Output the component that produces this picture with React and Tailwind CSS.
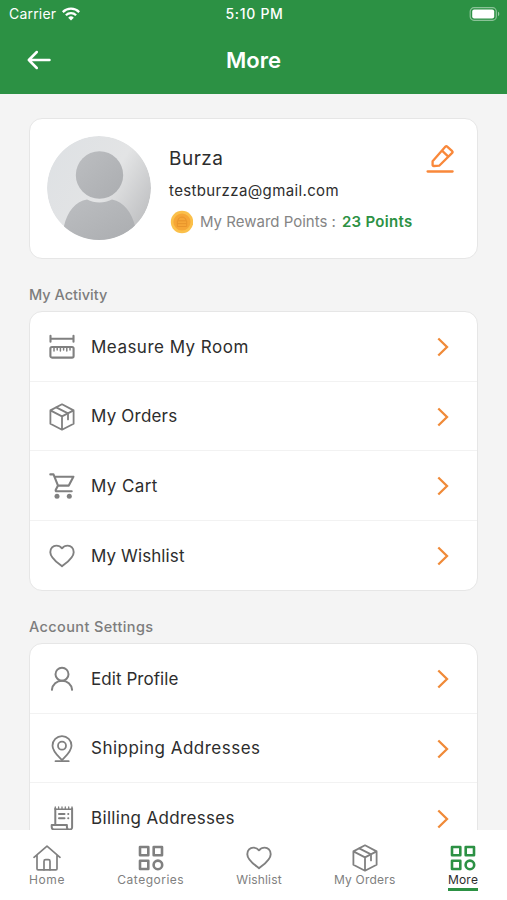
import React from 'react';
import clsx from 'clsx';

const stroke = {
  fill: 'none',
  stroke: 'currentColor',
  strokeLinecap: 'round',
  strokeLinejoin: 'round',
};

function MeasureIcon() {
  return (
    <svg viewBox="0 0 26 26" className="w-[26px] h-[26px]" {...stroke} strokeWidth="2.1">
      <path d="M1.5 1.8v6M24.5 1.8v6M1.5 4.8h23" />
      <rect x="1.4" y="13" width="23.2" height="10.6" rx="1.6" />
      <path d="M5 14v3M8.2 14v2M11.4 14v3M14.6 14v2M17.8 14v3M21 14v2" strokeWidth="1.5" />
    </svg>
  );
}

function BoxIcon() {
  return (
    <svg viewBox="0 0 26 28" className="w-[26px] h-[28px]" {...stroke} strokeWidth="1.8">
      <path d="M13 1.3 24.6 7.4v13.4L13 26.7 1.4 20.8V7.4zM1.4 7.4 13 13.4l11.6-6M13 13.4v13.3" />
      <path d="M7.2 4.4 19 10.4v6" />
    </svg>
  );
}

function CartIcon() {
  return (
    <svg viewBox="0 0 26 26" className="w-[26px] h-[26px]" {...stroke} strokeWidth="2.1">
      <path d="M1.3 1.4h3.2L9 12.6h10.8l4.6-8.9H5.5M9 12.6l-2.2 4.2c-.4.8 0 1.5.9 1.5h15" />
      <circle cx="8" cy="23.3" r="2.5" fill="currentColor" stroke="none" />
      <circle cx="20.3" cy="23.3" r="2.5" fill="currentColor" stroke="none" />
    </svg>
  );
}

function HeartIcon() {
  return (
    <svg viewBox="0 0 26 24" className="w-[26px] h-[24px]" {...stroke} strokeWidth="1.9">
      <path d="M13 22.2C9.5 19.3 1.3 14.4 1.3 8.2 1.3 4.3 4 1.6 7.3 1.6c2.3 0 4.3.9 5.7 2.7 1.4-1.8 3.4-2.7 5.7-2.7 3.3 0 6 2.7 6 6.6 0 6.2-8.2 11.1-11.7 14z" />
    </svg>
  );
}

function UserIcon() {
  return (
    <svg viewBox="0 0 24 26" className="w-[24px] h-[26px]" {...stroke} strokeWidth="2">
      <circle cx="12" cy="8.2" r="6.5" />
      <path d="M1.9 23.8C2.4 18.6 6.7 14.7 12 14.7s9.6 3.9 10.1 9.1" />
    </svg>
  );
}

function PinIcon() {
  return (
    <svg viewBox="0 0 22 28" className="w-[22px] h-[28px]" {...stroke} strokeWidth="1.8">
      <path d="M11 25.2C8.5 22.3 1.5 16.6 1.5 10.7a9.5 9.5 0 0 1 19 0c0 5.900-7 11.600-9.500 14.500z" />
      <circle cx="11" cy="10.7" r="4" />
      <path d="M4.5 26.2h13.2" />
    </svg>
  );
}

function BillIcon() {
  return (
    <svg viewBox="0 0 24 26" className="w-[24px] h-[26px]" {...stroke} strokeWidth="2">
      <path d="M5.3 18V2.6M22.1 2.6V21a2.400 2.400 0 0 1-2.400 2.600H4.300A2.600 2.600 0 0 1 1.700 21v-2h15.200v2a2.500 2.500 0 0 0 2.700 2.600" />
      <path d="M5.3 3.3h16.8" strokeWidth="1.5" />
      <path d="M5.3 1v2M8.6 1v2M12 1v2M15.3 1v2M18.7 1v2M22 1v2" strokeWidth="1.3" />
      <path d="M9 8h5.5M9 12.2h5.5M18.2 8h.1M18.2 12.2h.1" />
    </svg>
  );
}

function HomeIcon() {
  return (
    <svg viewBox="0 0 28 26" className="w-[28px] h-[26px]" {...stroke} strokeWidth="1.7">
      <path d="M1 12.300 14 1.200l13 11.100M4 10v13.700c0 .7.400 1.100 1.100 1.100h17.800c.7 0 1.100-.4 1.100-1.100V10" />
      <path d="M11 24.800v-8.600c0-1 .6-1.600 1.600-1.600h2.800c1 0 1.600.6 1.600 1.600v8.600" />
    </svg>
  );
}

function GridIcon() {
  return (
    <svg viewBox="0 0 26 26" className="w-[26px] h-[26px]" fill="none" stroke="currentColor" strokeWidth="2.6" strokeLinejoin="round">
      <rect x="2" y="2" width="8.3" height="8.3" />
      <rect x="15.7" y="2" width="8.3" height="8.3" />
      <rect x="2" y="15.7" width="8.3" height="8.3" />
      <circle cx="19.9" cy="19.9" r="4.3" />
    </svg>
  );
}

const activity = [
  { label: 'Measure My Room', Icon: MeasureIcon, tracking: 'tracking-[0.48px]' },
  { label: 'My Orders', Icon: BoxIcon, tracking: 'tracking-[0.2px]' },
  { label: 'My Cart', Icon: CartIcon, tracking: 'tracking-[0.4px]' },
  { label: 'My Wishlist', Icon: HeartIcon, tracking: 'tracking-[0.1px]' },
];

const settings = [
  { label: 'Edit Profile', Icon: UserIcon, tracking: 'tracking-[0.06px]' },
  { label: 'Shipping Addresses', Icon: PinIcon, tracking: 'tracking-[0.49px]' },
  { label: 'Billing Addresses', Icon: BillIcon, tracking: 'tracking-[0.33px]' },
];

const tabs = [
  { label: 'Home', Icon: HomeIcon, width: 'w-[36px]', tracking: 'tracking-[0.6px]' },
  { label: 'Categories', Icon: GridIcon, width: 'w-[67px]', tracking: 'tracking-[0.5px]' },
  { label: 'Wishlist', Icon: HeartIcon, width: 'w-[45px]', tracking: 'tracking-[0.15px]' },
  { label: 'My Orders', Icon: BoxIcon, width: 'w-[62px]', tracking: 'tracking-[0.2px]' },
  { label: 'More', Icon: GridIcon, width: 'w-[30px]', tracking: 'tracking-[0.2px]', active: true },
];

function StatusBar() {
  return (
    <div className="grid grid-cols-3 items-center h-[27px] pl-[9px] pr-[7px] text-white text-[14px]">
      <div className="flex items-center gap-[6px]">
        <span className="tracking-[0.2px]">Carrier</span>
        <svg viewBox="0 0 18 14" className="w-[18px] h-[14px]" fill="none" stroke="currentColor" strokeWidth="2.3">
          <path d="M.8 5.1a11.6 11.6 0 0 1 16.4 0" />
          <path d="M3.9 8.2a7.2 7.2 0 0 1 10.2 0" />
          <path d="M9 13.5 6.2 10.7a4 4 0 0 1 5.6 0z" fill="currentColor" stroke="none" />
        </svg>
      </div>
      <span className="text-center font-medium tracking-[0.7px] whitespace-nowrap">5:10 PM</span>
      <svg viewBox="0 0 31 14" className="w-[31px] h-[14px] justify-self-end">
        <rect x="1.2" y=".7" width="26.1" height="12.6" rx="3.8" fill="none" stroke="#fff" strokeOpacity=".45" strokeWidth="1.2" />
        <rect x="3.2" y="2.5" width="22" height="9" rx="2" fill="#fff" />
        <path d="M29 4.8c1.7.6 1.7 3.8 0 4.4z" fill="#fff" fillOpacity=".5" />
      </svg>
    </div>
  );
}

function Avatar() {
  return (
    <svg viewBox="0 0 104 104" className="w-[104px] h-[104px] shrink-0">
      <defs>
        <linearGradient id="avatar-bg" x1="0" y1=".2" x2="1" y2=".8">
          <stop offset="0" stopColor="#dee1e4" />
          <stop offset=".55" stopColor="#e3e4e5" />
          <stop offset="1" stopColor="#bcbdbf" />
        </linearGradient>
        <linearGradient id="avatar-fg" x1="0" y1="0" x2="1" y2="1">
          <stop offset="0" stopColor="#bcbec1" />
          <stop offset="1" stopColor="#abadb0" />
        </linearGradient>
        <clipPath id="avatar-clip">
          <circle cx="52" cy="52" r="52" />
        </clipPath>
      </defs>
      <g clipPath="url(#avatar-clip)">
        <circle cx="52" cy="52" r="52" fill="url(#avatar-bg)" />
        <path d="M17 90C20 76 29 65 40 63.5c7.5 4 17.5 4 25 0C77 66 85 77 88 90v14H17z" fill="url(#avatar-fg)" />
        <circle cx="52.5" cy="39" r="23.7" fill="url(#avatar-fg)" />
      </g>
    </svg>
  );
}

function ProfileCard() {
  return (
    <section className="flex h-[141px] pl-[17px] pr-[23px] pt-[17px] rounded-[13px] border border-[#e6e6e6] bg-white">
      <Avatar />
      <div className="flex-1 ml-[18px] pt-[10px] whitespace-nowrap">
        <div className="flex h-[26px] items-center text-[19px] tracking-[0.5px] text-[#2d2d2d]">Burza</div>
        <div className="flex h-[20px] mt-[9px] items-center text-[15px] tracking-[0.37px] text-[#2d2d2d]">testburzza@gmail.com</div>
        <div className="flex h-[24px] mt-[9px] items-center text-[15px]">
          <svg viewBox="0 0 24 24" className="w-[24px] h-[24px] shrink-0">
            <circle cx="13" cy="12" r="11.2" fill="#fbc04a" />
            <circle cx="13" cy="12" r="8.6" fill="#f6a636" />
            <path d="M9 10.500c0-4.500 8-4.500 8 0M8.300 10.800h9.400v5.700H8.300zM8.300 13.600h9.400" fill="none" stroke="#e8952c" strokeWidth="1" strokeLinejoin="round" />
          </svg>
          <span className="ml-[7px] text-[#858585]">My Reward Points :</span>
          <span className="ml-[6px] font-semibold tracking-[0.3px] text-[#2c9144]">23 Points</span>
        </div>
      </div>
      <svg viewBox="0 0 28 30" className="w-[28px] h-[30px] mt-[8px] text-[#f9883a]" {...stroke} strokeWidth="2.3">
        <path d="M6.6 17.2 19.5 2.6a1.200 1.200 0 0 1 1.700 0l5 4.600c.5.500.5 1.100 0 1.700L13.200 21.700l-5.400.3c-.8 0-1.300-.5-1.200-1.300zM16 6.600l6.300 6" />
        <path d="M1.600 27.500h25" />
      </svg>
    </section>
  );
}

function MenuGroup({ title, tracking, items }) {
  return (
    <section className="mt-[24px]">
      <h2 className={clsx('flex h-[23px] items-center text-[14.5px] font-medium text-[#7d7d7d]', tracking)}>{title}</h2>
      <ul className="mt-[5px] rounded-[13px] border border-[#e6e6e6] bg-white divide-y divide-[#f2f2f2]">
        {items.map(({ label, Icon, tracking }) => (
          <li key={label} className="flex h-[69.5px] items-center pl-[19px] pr-7 pt-[2px]">
            <span className="flex w-[26px] justify-center text-[#808080]">
              <Icon />
            </span>
            <span className={clsx('flex-1 ml-4 text-[17px] text-[#2d2d2d]', tracking)}>{label}</span>
            <svg viewBox="0 0 12 20" className="w-[12px] h-[20px] text-[#f08a38]" fill="none" stroke="currentColor" strokeWidth="2.3">
              <path d="m1.300 1.500 8.700 8.500-8.700 8.500" />
            </svg>
          </li>
        ))}
      </ul>
    </section>
  );
}

function BottomNav() {
  return (
    <nav className="flex h-[70px] shrink-0 justify-between px-[29px] pt-[13px] bg-white">
      {tabs.map(({ label, Icon, width, tracking, active }) => (
        <button
          key={label}
          type="button"
          className={clsx('flex flex-col items-center', width, active ? 'text-[#2c9144]' : 'text-[#808080]')}
        >
          <span className="flex h-[30px] items-center">
            <Icon />
          </span>
          <span className={clsx('h-[15px] text-[12px] leading-[14px] whitespace-nowrap', tracking, active && 'text-[#2d2d2d]')}>
            {label}
          </span>
          {active && <span className="h-[3px] w-full shrink-0 bg-[#2c9144]" />}
        </button>
      ))}
    </nav>
  );
}

export default function App() {
  return (
    <div className="flex h-[900px] w-full flex-col overflow-hidden bg-[#f4f4f4] font-['Inter',sans-serif]">
      <header className="h-[94px] shrink-0 bg-[#2c9144]">
        <StatusBar />
        <div className="grid h-[66px] grid-cols-3 items-center px-[27px] text-white">
          <svg viewBox="0 0 24 20" className="w-[24px] h-[20px]" {...stroke} strokeWidth="2.5">
            <path d="M22.5 10H1.8M9.8 2 1.8 10l8 8" />
          </svg>
          <h1 className="text-center text-[22px] font-semibold">More</h1>
        </div>
      </header>
      <main className="min-h-0 flex-1 overflow-hidden px-[29px] pt-6">
        <ProfileCard />
        <MenuGroup title="My Activity" tracking="tracking-[0px]" items={activity} />
        <MenuGroup title="Account Settings" tracking="tracking-[0.38px]" items={settings} />
      </main>
      <BottomNav />
    </div>
  );
}
